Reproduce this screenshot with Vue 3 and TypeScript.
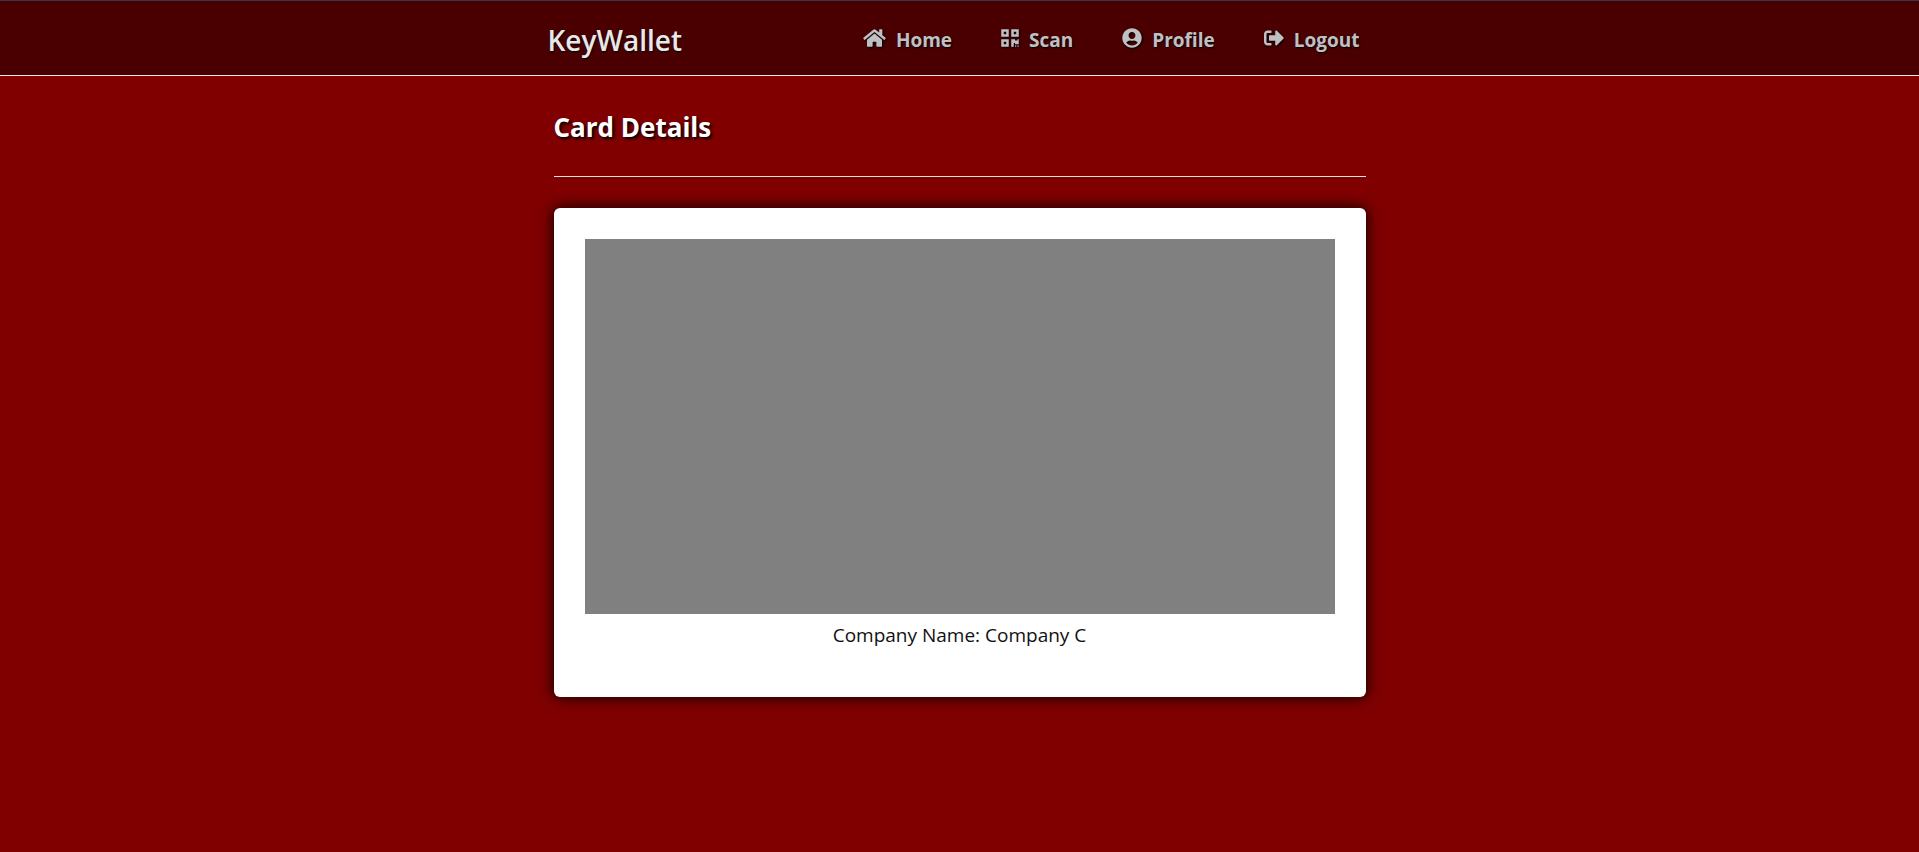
<script setup lang="ts">
interface NavItem {
  label: string
  width: number
  viewBox: string
  path: string
}

const navItems: NavItem[] = [
  {
    label: 'Home',
    width: 23,
    viewBox: '0 0 576 512',
    path: 'M280.37 148.26L96 300.11V464a16 16 0 0 0 16 16l112.06-.29a16 16 0 0 0 15.92-16V368a16 16 0 0 1 16-16h64a16 16 0 0 1 16 16v95.64a16 16 0 0 0 16 16.05L464 480a16 16 0 0 0 16-16V300L295.67 148.26a12.19 12.19 0 0 0-15.3 0zM571.6 251.47L488 182.56V44.05a12 12 0 0 0-12-12h-56a12 12 0 0 0-12 12v72.61L318.47 43a48 48 0 0 0-61 0L4.34 251.47a12 12 0 0 0-1.6 16.9l25.5 31A12 12 0 0 0 45.15 301l235.22-193.74a12.19 12.19 0 0 1 15.3 0L530.9 301a12 12 0 0 0 16.9-1.6l25.5-31a12 12 0 0 0-1.7-16.93z',
  },
  {
    label: 'Scan',
    width: 18,
    viewBox: '0 0 448 512',
    path: 'M0 224h192V32H0v192zM64 96h64v64H64V96zm192-64v192h192V32H256zm128 128h-64V96h64v64zM0 480h192V288H0v192zm64-128h64v64H64v-64zm352-64h32v128h-96v-32h-32v96h-64V288h96v32h64v-32zm0 160h32v32h-32v-32zm-64 0h32v32h-32v-32z',
  },
  {
    label: 'Profile',
    width: 20,
    viewBox: '0 0 496 512',
    path: 'M248 8C111 8 0 119 0 256s111 248 248 248 248-111 248-248S385 8 248 8zm0 96c48.6 0 88 39.4 88 88s-39.4 88-88 88-88-39.4-88-88 39.4-88 88-88zm0 344c-58.7 0-111.3-26.6-146.5-68.2 18.8-35.4 55.6-59.8 98.5-59.8 2.4 0 4.8.4 7.1 1.1 13 4.2 26.6 6.9 40.9 6.9 14.3 0 28-2.7 40.9-6.9 2.3-.7 4.7-1.1 7.1-1.1 42.9 0 79.7 24.4 98.5 59.8C359.3 421.4 306.7 448 248 448z',
  },
  {
    label: 'Logout',
    width: 20,
    viewBox: '0 0 512 512',
    path: 'M497 273L329 441c-15 15-41 4.5-41-17v-96H152c-13.3 0-24-10.7-24-24v-96c0-13.3 10.7-24 24-24h136V88c0-21.4 25.9-32 41-17l168 168c9.3 9.4 9.3 24.6 0 34zM192 436v-40c0-6.6-5.4-12-12-12H96c-17.7 0-32-14.3-32-32V160c0-17.7 14.3-32 32-32h84c6.6 0 12-5.4 12-12V76c0-6.6-5.4-12-12-12H96c-53 0-96 43-96 96v192c0 53 43 96 96 96h84c6.6 0 12-5.4 12-12z',
  },
]

const companyName = 'Company C'
</script>

<template>
  <div class="page">
    <header class="header">
      <div class="header-inner">
        <a class="brand" href="#">KeyWallet</a>
        <nav class="nav">
          <a v-for="item in navItems" :key="item.label" class="nav-link" href="#">
            <svg class="icon" :width="item.width" height="20" :viewBox="item.viewBox" aria-hidden="true">
              <path :d="item.path" />
            </svg>
            <span>{{ item.label }}</span>
          </a>
        </nav>
      </div>
    </header>
    <main class="content">
      <h1 class="title">Card Details</h1>
      <hr class="divider" />
      <section class="card">
        <div class="card-image"></div>
        <p class="company">Company Name: {{ companyName }}</p>
      </section>
    </main>
  </div>
</template>

<style>
body {
  margin: 0;
  background: #800000;
}
</style>

<style scoped>
.page {
  box-sizing: border-box;
  min-height: 100vh;
  border-top: 1px solid #2f3b47;
  background: #800000;
  font-family: "Segoe UI", "Open Sans", "Noto Sans", sans-serif;
}

.header {
  border-bottom: 1px solid #ffe4e0;
  background: #4a0000;
}

.header-inner {
  display: flex;
  align-items: center;
  justify-content: space-between;
  box-sizing: border-box;
  max-width: 824px;
  height: 74px;
  margin: 0 auto;
  padding: 4px 12px 0 0;
}

.brand {
  color: #e8e8e8;
  font-size: 28px;
  font-weight: 600;
  line-height: 40px;
  text-decoration: none;
  text-shadow: 1px 1px 2px #000;
}

.nav {
  display: flex;
  gap: 49px;
}

.nav-link {
  display: flex;
  align-items: center;
  gap: 10px;
  color: #c0c0c4;
  font-size: 19px;
  font-weight: 700;
  line-height: 30px;
  text-decoration: none;
  text-shadow: 1px 1px 2px #000;
}

.icon {
  margin-bottom: 4px;
  fill: currentColor;
  filter: drop-shadow(1px 1px 1px #000);
}

.content {
  max-width: 812px;
  margin: 0 auto;
  padding: 32px 0;
}

.title {
  margin: 0;
  color: #fff;
  font-size: 26px;
  font-weight: 700;
  line-height: 38px;
  text-shadow: 2px 2px 3px #000;
}

.divider {
  height: 1px;
  margin: 30px 0 31px;
  border: 0;
  background: #e6e0e0;
}

.card {
  padding: 31px 31px 47px;
  border-radius: 6px;
  background: #fff;
  box-shadow: 0 0 15px #000;
}

.card-image {
  aspect-ratio: 2 / 1;
  background: #808080;
}

.company {
  margin: 6px 0 0;
  color: #111;
  font-size: 19px;
  line-height: 30px;
  text-align: center;
}
</style>
